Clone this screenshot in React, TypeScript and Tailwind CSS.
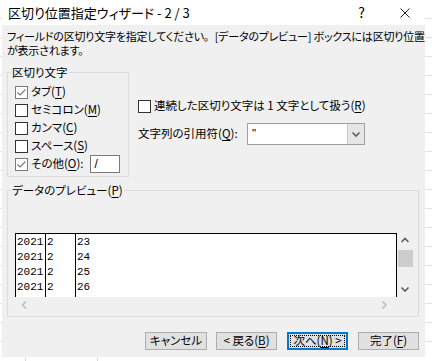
import type { ReactNode } from "react";

function GridStrip({ className }: { className: string }) {
  return (
    <div className={`flex flex-col bg-white ${className}`}>
      {Array.from({ length: 20 }).map((_, i) => (
        <div key={i} className="h-[19px] shrink-0 border-b border-[#e1e1e1]" />
      ))}
    </div>
  );
}

function Check({ checked }: { checked?: boolean }) {
  return (
    <span
      className={`flex size-[13px] shrink-0 items-center justify-center border bg-white ${
        checked ? "border-[#7a7a7a]" : "border-[#333333]"
      }`}
    >
      {checked ? (
        <svg viewBox="0 0 11 11" className="size-[11px]" aria-hidden="true">
          <polyline
            points="1.5,5.5 4,8 9.5,2.5"
            fill="none"
            stroke="#7a7a7a"
            strokeWidth="1.2"
          />
        </svg>
      ) : null}
    </span>
  );
}

function Mn({ children }: { children: ReactNode }) {
  return <u className="underline-offset-[2px]">{children}</u>;
}

function Chevron({ dir, color }: { dir: "up" | "down" | "left" | "right"; color: string }) {
  const pts = {
    up: "1.5,6 5,2.5 8.5,6",
    down: "1.5,3.5 5,7 8.5,3.5",
    left: "6,1.5 2.5,5 6,8.5",
    right: "3.5,1.5 7,5 3.5,8.5",
  }[dir];
  return (
    <svg viewBox="0 0 10 10" className="size-[10px]" aria-hidden="true">
      <polyline points={pts} fill="none" stroke={color} strokeWidth="1.6" />
    </svg>
  );
}

const rows = [
  ["2021", "2", "23"],
  ["2021", "2", "24"],
  ["2021", "2", "25"],
  ["2021", "2", "26"],
];

export default function App() {
  return (
    <div className="flex h-[361px] w-[432px] flex-col overflow-hidden bg-white font-['Noto_Sans_CJK_JP','Noto_Sans',sans-serif] text-black [font-feature-settings:'palt']">
      <div className="flex h-[357px] shrink-0">
        <GridStrip className="w-[2px] shrink-0" />

        <div className="flex w-[423px] shrink-0 flex-col">
          {/* title bar */}
          <div className="flex h-[25px] shrink-0 items-center bg-white pl-[6px] text-[13px]">
            <span>区切り位置指定ウィザード - 2 / 3</span>
            <span className="ml-auto mr-[35px] text-[14px]">?</span>
            <svg viewBox="0 0 10 10" className="mr-[15px] size-[10px]" aria-hidden="true">
              <path d="M0.5 0.5 L9.5 9.5 M9.5 0.5 L0.5 9.5" stroke="#222" strokeWidth="1" />
            </svg>
          </div>

          <div className="flex flex-1 flex-col bg-[#f0f0f0] pt-[4px] text-[11.5px]">
            <p className="ml-[5px] whitespace-nowrap text-[11px] leading-[14px] tracking-[-0.2px]">
              フィールドの区切り文字を指定してください
              <span className="[font-feature-settings:normal]">。</span>
              [データのプレビュー] ボックスには区切り位置
              <br />
              が表示されます。
            </p>

            <div className="mt-[8px] flex">
              <fieldset className="ml-[5px] h-[112px] w-[122px] shrink-0 border border-[#dcdcdc]">
                <legend className="ml-[3px] px-[1px] leading-[14px]">区切り文字</legend>
                <div className="flex flex-col pl-[7px] pt-[4px]">
                  <label className="flex h-[18px] items-center gap-[3px]">
                    <Check checked />
                    <span>タブ(<Mn>T</Mn>)</span>
                  </label>
                  <label className="flex h-[18px] items-center gap-[3px]">
                    <Check />
                    <span>セミコロン(<Mn>M</Mn>)</span>
                  </label>
                  <label className="flex h-[18px] items-center gap-[3px]">
                    <Check />
                    <span>カンマ(<Mn>C</Mn>)</span>
                  </label>
                  <label className="flex h-[18px] items-center gap-[3px]">
                    <Check />
                    <span>スペース(<Mn>S</Mn>)</span>
                  </label>
                  <div className="flex h-[18px] items-center gap-[3px]">
                    <Check checked />
                    <span>その他(<Mn>O</Mn>):</span>
                    <span className="ml-[3px] flex h-[18px] w-[30px] items-center border border-[#7a7a7a] bg-white pl-[4px] font-['Liberation_Sans',sans-serif] text-[12px]">
                      /
                    </span>
                  </div>
                </div>
              </fieldset>

              <div className="ml-[9px] flex flex-col">
                <label className="mt-[32px] flex h-[18px] items-center gap-[3px]">
                  <Check />
                  <span>
                    連続した区切り文字は&nbsp;1&nbsp;文字として扱う(<Mn>R</Mn>)
                  </span>
                </label>
                <div className="mt-[8px] flex h-[22px] items-center">
                  <span className="w-[109px] shrink-0">文字列の引用符(<Mn>Q</Mn>):</span>
                  <div className="flex h-[22px] w-[118px] border border-[#a0a0a0] bg-white">
                    <span className="flex-1 pl-[4px] font-['Liberation_Sans',sans-serif] leading-[18px]">
                      "
                    </span>
                    <span className="flex w-[17px] items-center justify-center border-l border-[#c8c8c8] bg-[#e6e6e6]">
                      <Chevron dir="down" color="#606060" />
                    </span>
                  </div>
                </div>
              </div>
            </div>

            <fieldset className="ml-[5px] mt-[6px] w-[412px] border border-[#dcdcdc]">
              <legend className="ml-[3px] px-[1px] leading-[14px]">
                データのプレビュー(<Mn>P</Mn>)
              </legend>
              <div className="flex flex-col pb-[3px] pl-[7px] pt-[36px]">
                <div className="flex h-[64px]">
                  <div className="flex w-[382px] overflow-hidden border-r border-t border-black bg-white font-['Liberation_Mono',monospace] text-[11px]">
                    {[0, 1, 2].map((c) => (
                      <div
                        key={c}
                        className={`flex flex-col border-l border-black pl-[1px] pt-[1px] ${
                          c === 2 ? "flex-1" : "w-[30px]"
                        }`}
                      >
                        {rows.map((r, i) => (
                          <span key={i} className="h-[15px] shrink-0 leading-[15px]">
                            {r[c]}
                          </span>
                        ))}
                      </div>
                    ))}
                  </div>
                  <div className="flex w-[16px] flex-col">
                    <span className="flex h-[16px] items-center justify-center">
                      <Chevron dir="up" color="#606060" />
                    </span>
                    <span className="ml-[1px] mt-[1px] h-[17px] w-[15px] bg-[#cdcdcd]" />
                    <span className="flex-1" />
                    <span className="flex h-[16px] items-center justify-center">
                      <Chevron dir="down" color="#606060" />
                    </span>
                  </div>
                </div>
                <div className="flex h-[16px] w-[382px] items-center justify-between pl-[5px] pr-[8px]">
                  <Chevron dir="left" color="#bfbfbf" />
                  <Chevron dir="right" color="#bfbfbf" />
                </div>
              </div>
            </fieldset>

            <div className="ml-[143px] mt-[15px] flex h-[18px] text-[11.5px]">
              <button className="flex h-[18px] w-[62px] items-center justify-center border border-[#adadad] bg-[#e1e1e1]">
                <span>キャンセル</span>
              </button>
              <button className="ml-[9px] flex h-[18px] w-[61px] items-center justify-center border border-[#adadad] bg-[#e1e1e1]">
                <span>
                  &lt;&nbsp;戻る(<Mn>B</Mn>)
                </span>
              </button>
              <button className="ml-[10px] flex h-[18px] w-[61px] items-center justify-center border-2 border-[#0078d7] bg-[#e1e1e1] p-[1px]">
                <span className="flex h-full w-full items-center justify-center border border-dotted border-black">
                  <span>
                    次へ(<Mn>N</Mn>)&nbsp;&gt;
                  </span>
                </span>
              </button>
              <button className="ml-[10px] flex h-[18px] w-[61px] items-center justify-center border border-[#adadad] bg-[#e1e1e1]">
                <span>
                  完了(<Mn>F</Mn>)
                </span>
              </button>
            </div>
          </div>
        </div>

        <GridStrip className="flex-1" />
      </div>
      <div className="relative h-[4px] bg-white">
        <span className="absolute left-[25px] top-0 h-[4px] w-px bg-[#d4d4d4]" />
        <span className="absolute left-[97px] top-0 h-[4px] w-px bg-[#d4d4d4]" />
      </div>
    </div>
  );
}
